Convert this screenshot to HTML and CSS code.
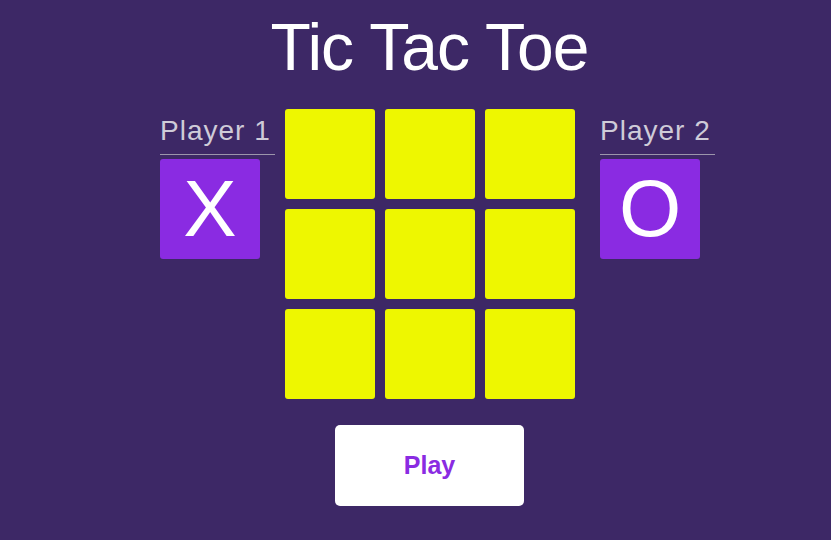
FILE: index.html
```html
<!DOCTYPE html>
<html lang="en">
<head>
<meta charset="utf-8">
<title>Tic Tac Toe</title>
<link rel="stylesheet" href="styles.css">
</head>
<body>
<main class="app">
  <h1 class="title">Tic Tac Toe</h1>
  <div class="game">
    <section class="player player-left">
      <div class="player-name">Player 1</div>
      <div class="player-mark">X</div>
    </section>
    <div class="board">
      <div class="cell"></div><div class="cell"></div><div class="cell"></div>
      <div class="cell"></div><div class="cell"></div><div class="cell"></div>
      <div class="cell"></div><div class="cell"></div><div class="cell"></div>
    </div>
    <section class="player player-right">
      <div class="player-name">Player 2</div>
      <div class="player-mark">O</div>
    </section>
  </div>
  <button class="play">Play</button>
</main>
</body>
</html>
```
FILE: styles.css
```css
html, body {
  margin: 0;
  padding: 0;
  background: #3d2866;
  height: 100%;
}
body {
  font-family: "Liberation Sans", Arial, sans-serif;
  padding-left: 28px;
  box-sizing: border-box;
}
.app {
  display: flex;
  flex-direction: column;
  align-items: center;
}
.title {
  margin: 14px 0 0;
  font-size: 66px;
  line-height: 1;
  font-weight: normal;
  color: #ffffff;
  letter-spacing: -1px;
}
.game {
  display: flex;
  align-items: flex-start;
  margin-top: 29px;
  margin-left: 16px;
}
.player {
  width: 115px;
  margin-top: 8px;
}
.player-left { margin-right: 10px; }
.player-right { margin-left: 25px; }
.player-name {
  font-size: 28px;
  line-height: 1;
  letter-spacing: 1px;
  color: #cfcbd8;
  padding-bottom: 9px;
  border-bottom: 1px solid #9c95ab;
}
.player-mark {
  margin-top: 4px;
  width: 100px;
  height: 100px;
  border-radius: 3px;
  background: #8a2be2;
  color: #ffffff;
  font-size: 80px;
  line-height: 100px;
  text-align: center;
}
.board {
  display: grid;
  grid-template-columns: repeat(3, 90px);
  grid-template-rows: repeat(3, 90px);
  gap: 10px;
}
.cell {
  background: #eef700;
  border-radius: 3px;
}
.play {
  margin-top: 26px;
  width: 189px;
  height: 81px;
  border: none;
  border-radius: 5px;
  background: #ffffff;
  color: #8a2be2;
  font-family: "Liberation Sans", Arial, sans-serif;
  font-weight: bold;
  font-size: 25px;
  padding: 0;
}
```
